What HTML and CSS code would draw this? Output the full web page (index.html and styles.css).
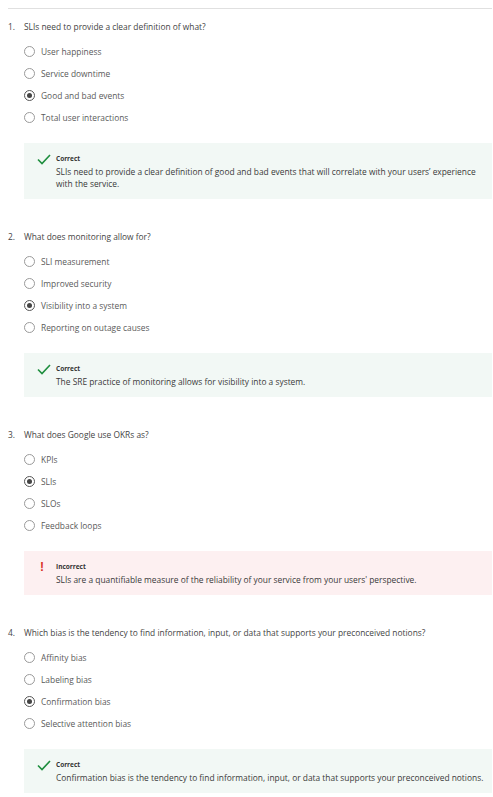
FILE: index.html
```html
<!DOCTYPE html>
<html>
<head>
<meta charset="utf-8">
<link rel="stylesheet" href="styles.css">
</head>
<body>
<div class="quiz">
  <div class="question">
    <div class="q-title"><span class="num">1.</span><span>SLIs need to provide a clear definition of what?</span></div>
    <ul class="options">
      <li class="opt"><span class="radio"></span>User happiness</li>
      <li class="opt"><span class="radio"></span>Service downtime</li>
      <li class="opt"><span class="radio checked"></span>Good and bad events</li>
      <li class="opt"><span class="radio"></span>Total user interactions</li>
    </ul>
    <div class="feedback correct">
      <svg class="icon" width="14" height="11" viewBox="0 0 14 11"><path d="M1 5.5 L5 9.5 L13 1" fill="none" stroke="#1e8e3e" stroke-width="1.6"/></svg>
      <div class="fb-text">
        <div class="fb-label">Correct</div>
        <div class="fb-body">SLIs need to provide a clear definition of good and bad events that will correlate with your users’ experience with the service.</div>
      </div>
    </div>
  </div>

  <div class="question">
    <div class="q-title"><span class="num">2.</span><span>What does monitoring allow for?</span></div>
    <ul class="options">
      <li class="opt"><span class="radio"></span>SLI measurement</li>
      <li class="opt"><span class="radio"></span>Improved security</li>
      <li class="opt"><span class="radio checked"></span>Visibility into a system</li>
      <li class="opt"><span class="radio"></span>Reporting on outage causes</li>
    </ul>
    <div class="feedback correct">
      <svg class="icon" width="14" height="11" viewBox="0 0 14 11"><path d="M1 5.5 L5 9.5 L13 1" fill="none" stroke="#1e8e3e" stroke-width="1.6"/></svg>
      <div class="fb-text">
        <div class="fb-label">Correct</div>
        <div class="fb-body">The SRE practice of monitoring allows for visibility into a system.</div>
      </div>
    </div>
  </div>

  <div class="question">
    <div class="q-title"><span class="num">3.</span><span>What does Google use OKRs as?</span></div>
    <ul class="options">
      <li class="opt"><span class="radio"></span>KPIs</li>
      <li class="opt"><span class="radio checked"></span>SLIs</li>
      <li class="opt"><span class="radio"></span>SLOs</li>
      <li class="opt"><span class="radio"></span>Feedback loops</li>
    </ul>
    <div class="feedback incorrect">
      <span class="icon bang">!</span>
      <div class="fb-text">
        <div class="fb-label">Incorrect</div>
        <div class="fb-body">SLIs are a quantifiable measure of the reliability of your service from your users' perspective.</div>
      </div>
    </div>
  </div>

  <div class="question">
    <div class="q-title"><span class="num">4.</span><span>Which bias is the tendency to find information, input, or data that supports your preconceived notions?</span></div>
    <ul class="options">
      <li class="opt"><span class="radio"></span>Affinity bias</li>
      <li class="opt"><span class="radio"></span>Labeling bias</li>
      <li class="opt"><span class="radio checked"></span>Confirmation bias</li>
      <li class="opt"><span class="radio"></span>Selective attention bias</li>
    </ul>
    <div class="feedback correct">
      <svg class="icon" width="14" height="11" viewBox="0 0 14 11"><path d="M1 5.5 L5 9.5 L13 1" fill="none" stroke="#1e8e3e" stroke-width="1.6"/></svg>
      <div class="fb-text">
        <div class="fb-label">Correct</div>
        <div class="fb-body">Confirmation bias is the tendency to find information, input, or data that supports your preconceived notions.</div>
      </div>
    </div>
  </div>
</div>
</body>
</html>
```

FILE: styles.css
```css
html, body {
  margin: 0;
  padding: 0;
  background: #ffffff;
}
body {
  padding: 8px 0 0 8px;
  font-family: "Open Sans", "DejaVu Sans", sans-serif;
  font-size: 8.4px;
  color: #444444;
}
.quiz {
  border-top: 1px solid #e0e0e0;
  padding-top: 12px;
  margin-right: 1px;
}
.question {
  margin-bottom: 32px;
}
.q-title {
  display: flex;
  line-height: 12px;
  height: 12px;
  color: #444444;
  margin-bottom: 7px;
}
.num {
  width: 16px;
  flex: none;
}
.options {
  list-style: none;
  margin: 0 0 15px 16px;
  padding: 0;
}
.opt {
  display: flex;
  align-items: center;
  height: 22px;
  color: #5a5a5a;
}
.radio {
  width: 9px;
  height: 9px;
  border: 1px solid #9a9a9a;
  border-radius: 50%;
  margin-right: 6px;
  position: relative;
  flex: none;
}
.radio.checked {
  border-color: #555555;
}
.radio.checked::after {
  content: "";
  position: absolute;
  left: 2px;
  top: 2px;
  width: 5px;
  height: 5px;
  border-radius: 50%;
  background: #444444;
}
.feedback {
  margin-left: 16px;
  display: flex;
  padding: 11px 0 9px 13px;
}
.feedback.correct {
  background: #f2f8f5;
}
.feedback.incorrect {
  background: #fdf0f1;
}
.icon {
  flex: none;
  width: 14px;
  margin-right: 5px;
}
.bang {
  color: #d93025;
  font-weight: bold;
  font-size: 12px;
  line-height: 10px;
  text-align: center;
  width: 10px;
  margin-right: 9px;
  font-family: "Liberation Sans", sans-serif;
}
.fb-text {
  flex: 1;
  padding-right: 6px;
}
.fb-label {
  font-size: 6.5px;
  font-weight: bold;
  line-height: 10px;
  color: #333333;
  margin-bottom: 2px;
}
.fb-body {
  line-height: 12px;
  color: #3a3a3a;
}
```
